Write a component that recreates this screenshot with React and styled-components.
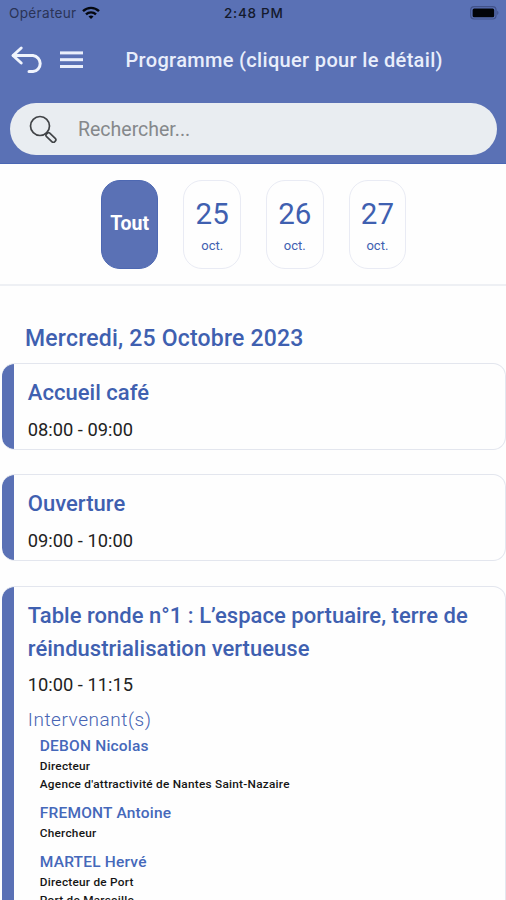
import React from "react";
import styled, { createGlobalStyle } from "styled-components";

const BLUE = "#5a71b5";
const INK = "#3f60b0";

const Global = createGlobalStyle`
  * { box-sizing: border-box; }
  html, body { margin: 0; padding: 0; background: #fff; }
  body { height: 900px; overflow: hidden; font-family: Roboto, sans-serif; }
`;

const Screen = styled.div`
  width: 506px;
  height: 900px;
  overflow: hidden;
  background: #fefefe;
`;

const Header = styled.header`
  height: 164px;
  background: ${BLUE};
  border-bottom: 1px solid #4a67b4;
`;

const StatusBar = styled.div`
  height: 26px;
  padding: 0 7px 0 9px;
  display: grid;
  grid-template-columns: 215px 1fr auto;
  align-items: center;
  font-family: Inter, sans-serif;
  color: #141a2c;
`;

const Carrier = styled.div`
  display: flex;
  align-items: center;
  gap: 5.5px;
  font-size: 13.6px;
  letter-spacing: 0.3px;
  color: #2a3457;
`;

const Clock = styled.div`
  font-size: 13.5px;
  font-weight: 500;
  letter-spacing: 0.75px;
`;

const Power = styled.div`
  display: flex;
  justify-content: flex-end;
`;

const NavBar = styled.div`
  height: 66px;
  display: flex;
  align-items: center;
  padding: 1px 0 0 10px;
`;

const IconButton = styled.button`
  display: flex;
  border: 0;
  padding: 0;
  margin: 0 ${(p) => p.$gap}px 0 0;
  background: none;
`;

const PageTitle = styled.h1`
  margin: 0;
  font-size: 20px;
  line-height: 24px;
  font-weight: 500;
  letter-spacing: 0.33px;
  color: #e9eefb;
  white-space: nowrap;
`;

const SearchBox = styled.label`
  margin: 11px 9px 0 10px;
  height: 52px;
  border-radius: 26px;
  background: #e9edf1;
  display: flex;
  align-items: center;
  padding-left: 19px;
  gap: 21px;
`;

const SearchInput = styled.input`
  border: 0;
  outline: 0;
  padding: 2px 0 0;
  width: 360px;
  background: transparent;
  font: 400 19.5px/24px Roboto, sans-serif;
  &::placeholder { color: #85888b; opacity: 1; }
`;

const DayPicker = styled.nav`
  height: 122px;
  padding: 16px 0 0 1px;
  display: flex;
  justify-content: center;
  gap: 25px;
  border-bottom: 2px solid #eef0f4;
`;

const Day = styled.button`
  width: 57.6px;
  height: 89px;
  padding: 1px 0 0;
  border-radius: 19px;
  border: 1px solid ${(p) => (p.$active ? "#4d68b2" : "#e9ebf4")};
  background: ${(p) => (p.$active ? BLUE : "#fefefe")};
  color: ${(p) => (p.$active ? "#fff" : INK)};
  font-family: Roboto, sans-serif;
  display: flex;
  flex-direction: column;
  align-items: center;
  justify-content: center;
`;

const AllLabel = styled.span`
  font-size: 19.5px;
  line-height: 24px;
  font-weight: 700;
  margin-bottom: 2px;
`;

const DayNumber = styled.span`
  font-size: 29.5px;
  line-height: 34px;
`;

const Month = styled.span`
  font-size: 13px;
  line-height: 16px;
  margin-top: 7px;
`;

const DateHeading = styled.h2`
  margin: 38px 0 9px 25px;
  font-size: 23px;
  line-height: 30px;
  font-weight: 500;
  letter-spacing: 0.2px;
  color: ${INK};
`;

const Session = styled.article`
  margin: 0 0 24.8px 2px;
  width: 503.5px;
  min-height: ${(p) => (p.$tall ? 340 : 86.5)}px;
  padding: 12px 20px 0 25.8px;
  border: 1px solid #e3e6ee;
  border-left: 0;
  border-radius: 13px;
  background: linear-gradient(to right, ${BLUE} 12px, #fefefe 12px) border-box;
`;

const SessionTitle = styled.h3`
  margin: 0;
  font-size: 22px;
  line-height: 33px;
  font-weight: 500;
  letter-spacing: 0.03px;
  color: ${INK};
`;

const Time = styled.div`
  margin-top: 6.5px;
  font-size: 18.3px;
  line-height: 28px;
  color: #222;
`;

const SpeakersLabel = styled.div`
  margin-top: 9px;
  font-size: 19px;
  line-height: 24px;
  font-weight: 300;
  letter-spacing: 0.55px;
  color: #4764b3;
`;

const Speakers = styled.div`
  padding: 3.5px 0 0 12px;
`;

const Speaker = styled.div`
  margin-bottom: 9px;
`;

const SpeakerName = styled.div`
  font-size: 15.5px;
  line-height: 21.3px;
  font-weight: 500;
  letter-spacing: 0.2px;
  color: #4568ba;
`;

const SpeakerInfo = styled.div`
  font-size: 11.8px;
  line-height: 18.5px;
  font-weight: 500;
  letter-spacing: 0.25px;
  color: #151515;
`;

const WifiIcon = () => (
  <svg width="18" height="14" viewBox="0 0 18 14" fill="none" stroke="#05080f" strokeWidth="2.4">
    <path d="M1 5.2C5.6.8 12.4.8 17 5.2" />
    <path d="M4 8.4C6.8 5.7 11.2 5.7 14 8.4" />
    <path d="M6.5 10.4C8 9.1 10 9.1 11.5 10.4L9 13Z" fill="#05080f" stroke="none" />
  </svg>
);

const BatteryIcon = () => (
  <svg width="29" height="14" viewBox="0 0 29 14">
    <rect x="0.7" y="0.7" width="25.3" height="12.3" rx="3.4" fill="none" stroke="#41528a" strokeWidth="1.2" />
    <rect x="2.6" y="2.4" width="21.6" height="8.9" rx="1.5" fill="#020408" />
    <path d="M27.2 4.8C28.9 5.5 28.9 8.3 27.2 9Z" fill="#41528a" />
  </svg>
);

const BackIcon = () => (
  <svg width="34" height="30" viewBox="0 0 34 30" fill="none" stroke="#f0f4fd" strokeWidth="3" strokeLinecap="round" strokeLinejoin="round">
    <path d="M11.2 3L3 10.5L11.2 18" />
    <path d="M3.4 10.5H23A8.1 8.1 0 0 1 23 26.6H19" />
  </svg>
);

const MenuIcon = () => (
  <svg width="23" height="18" viewBox="0 0 23 18" fill="#e9eefb">
    <rect width="23" height="3" y="0.4" />
    <rect width="23" height="3" y="7.2" />
    <rect width="23" height="3" y="14" />
  </svg>
);

const SearchIcon = () => (
  <svg width="28" height="28" viewBox="0 0 28 28" fill="none" stroke="#414447" strokeWidth="1.7" strokeLinejoin="round">
    <circle cx="11" cy="11" r="9.5" />
    <path d="M17.4 17.8L18.6 19" />
    <rect x="16.2" y="20.2" width="11.4" height="4.6" rx="1.9" transform="rotate(44 21.9 22.5)" />
  </svg>
);

const DAYS = ["25", "26", "27"];

const SESSIONS = [
  { title: "Accueil café", time: "08:00 - 09:00" },
  { title: "Ouverture", time: "09:00 - 10:00" },
  {
    title: "Table ronde n°1 : L’espace portuaire, terre de réindustrialisation vertueuse",
    time: "10:00 - 11:15",
    speakers: [
      { name: "DEBON Nicolas", info: ["Directeur", "Agence d'attractivité de Nantes Saint-Nazaire"] },
      { name: "FREMONT Antoine", info: ["Chercheur"] },
      { name: "MARTEL Hervé", info: ["Directeur de Port", "Port de Marseille"] },
    ],
  },
];

export default function App() {
  return (
    <Screen>
      <Global />
      <Header>
        <StatusBar>
          <Carrier>Opérateur <WifiIcon /></Carrier>
          <Clock>2:48 PM</Clock>
          <Power><BatteryIcon /></Power>
        </StatusBar>
        <NavBar>
          <IconButton $gap={16} aria-label="Retour"><BackIcon /></IconButton>
          <IconButton $gap={42.5} aria-label="Menu"><MenuIcon /></IconButton>
          <PageTitle>Programme (cliquer pour le détail)</PageTitle>
        </NavBar>
        <SearchBox>
          <SearchIcon />
          <SearchInput placeholder="Rechercher..." />
        </SearchBox>
      </Header>
      <DayPicker>
        <Day $active><AllLabel>Tout</AllLabel></Day>
        {DAYS.map((d) => (
          <Day key={d}>
            <DayNumber>{d}</DayNumber>
            <Month>oct.</Month>
          </Day>
        ))}
      </DayPicker>
      <main>
        <DateHeading>Mercredi, 25 Octobre 2023</DateHeading>
        {SESSIONS.map((s) => (
          <Session key={s.time} $tall={Boolean(s.speakers)}>
            <SessionTitle>{s.title}</SessionTitle>
            <Time>{s.time}</Time>
            {s.speakers && (
              <>
                <SpeakersLabel>Intervenant(s)</SpeakersLabel>
                <Speakers>
                  {s.speakers.map((p) => (
                    <Speaker key={p.name}>
                      <SpeakerName>{p.name}</SpeakerName>
                      {p.info.map((line) => <SpeakerInfo key={line}>{line}</SpeakerInfo>)}
                    </Speaker>
                  ))}
                </Speakers>
              </>
            )}
          </Session>
        ))}
      </main>
    </Screen>
  );
}
